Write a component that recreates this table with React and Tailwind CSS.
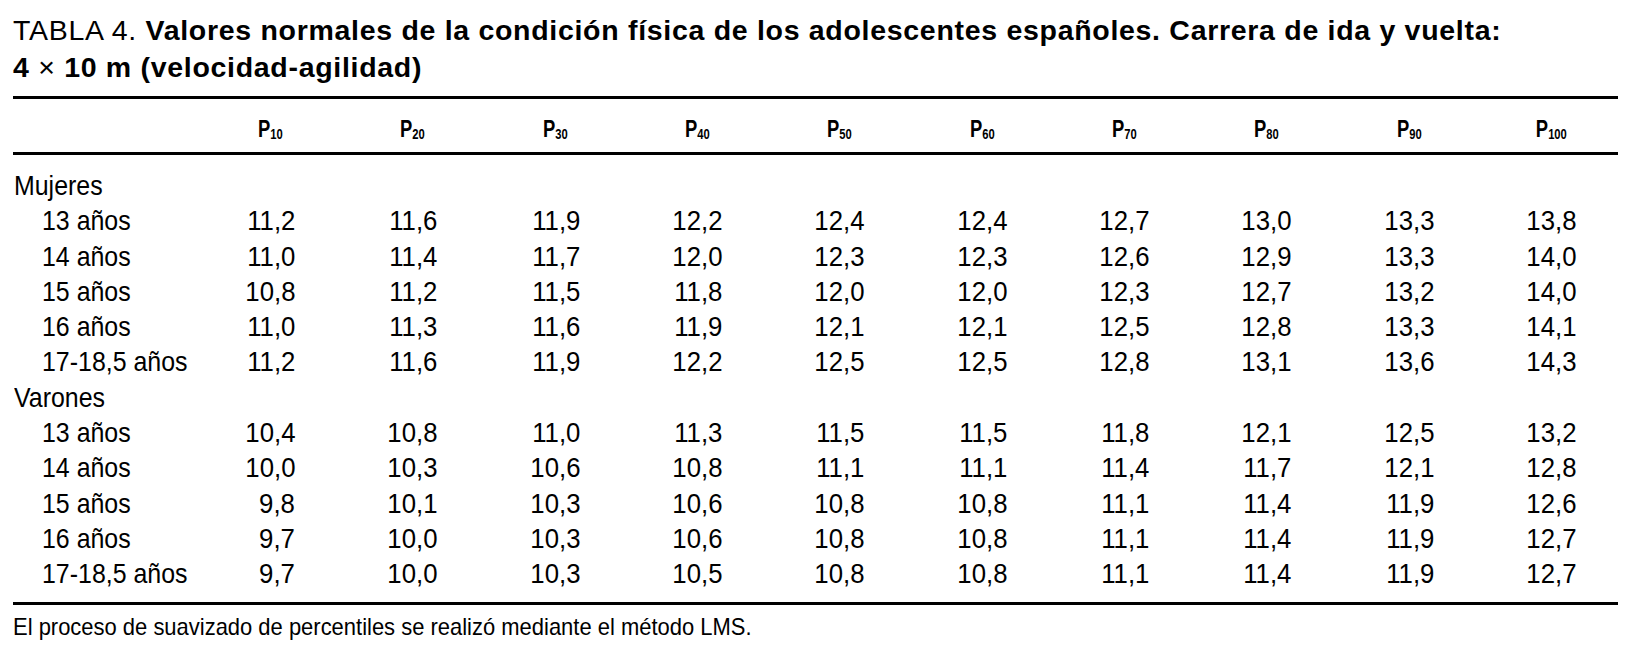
import React from "react";

const headers = ["10", "20", "30", "40", "50", "60", "70", "80", "90", "100"];

const groups = [
  {
    name: "Mujeres",
    rows: [
      ["13 años", "11,2 11,6 11,9 12,2 12,4 12,4 12,7 13,0 13,3 13,8"],
      ["14 años", "11,0 11,4 11,7 12,0 12,3 12,3 12,6 12,9 13,3 14,0"],
      ["15 años", "10,8 11,2 11,5 11,8 12,0 12,0 12,3 12,7 13,2 14,0"],
      ["16 años", "11,0 11,3 11,6 11,9 12,1 12,1 12,5 12,8 13,3 14,1"],
      ["17-18,5 años", "11,2 11,6 11,9 12,2 12,5 12,5 12,8 13,1 13,6 14,3"],
    ],
  },
  {
    name: "Varones",
    rows: [
      ["13 años", "10,4 10,8 11,0 11,3 11,5 11,5 11,8 12,1 12,5 13,2"],
      ["14 años", "10,0 10,3 10,6 10,8 11,1 11,1 11,4 11,7 12,1 12,8"],
      ["15 años", "9,8 10,1 10,3 10,6 10,8 10,8 11,1 11,4 11,9 12,6"],
      ["16 años", "9,7 10,0 10,3 10,6 10,8 10,8 11,1 11,4 11,9 12,7"],
      ["17-18,5 años", "9,7 10,0 10,3 10,5 10,8 10,8 11,1 11,4 11,9 12,7"],
    ],
  },
];

const gridCols = "grid grid-cols-[140px_repeat(10,142.35px)_1fr]";

export default function App() {
  return (
    <div className="w-[1626px] h-[651px] bg-white text-black pl-[13px] pt-[12px] overflow-hidden font-['Liberation_Sans',Arial,sans-serif]">
      <div className="w-[1605px]">
        <div className="text-[28.5px] leading-[37px] tracking-[0.7px]">
          <div className="whitespace-nowrap">
            <span>TABLA 4. </span>
            <span className="font-bold">
              Valores normales de la condición física de los adolescentes españoles. Carrera de ida y vuelta:
            </span>
          </div>
          <div className="whitespace-nowrap font-bold">
            4 <span className="font-normal">×</span> 10 m (velocidad-agilidad)
          </div>
        </div>

        <div className="mt-[10px] border-t-[3px] border-b-[3px] border-black">
          <div className={`${gridCols} h-[53px] items-end pb-[7px]`}>
            <div />
            {headers.map((h) => (
              <div key={h} className="flex justify-end">
                <div className="w-[50px] flex justify-center">
                  <span className="inline-block origin-center scale-x-[0.8] whitespace-nowrap text-[23px] leading-[22px] font-bold">
                    P<span className="text-[14px] align-[-2px]">{h}</span>
                  </span>
                </div>
              </div>
            ))}
            <div />
          </div>
        </div>

        <div className="pt-[13px] pb-[10px] border-b-[3px] border-black text-[28px] leading-[35.3px]">
          {groups.map((g) => (
            <div key={g.name}>
              <div className="pl-[1px] whitespace-nowrap">
                <span className="inline-block origin-left scale-x-[0.89]">{g.name}</span>
              </div>
              {g.rows.map(([label, vals]) => (
                <div key={g.name + label} className={gridCols}>
                  <div className="pl-[29px] whitespace-nowrap">
                    <span className="inline-block origin-left scale-x-[0.89]">{label}</span>
                  </div>
                  {vals.split(" ").map((v, i) => (
                    <div key={i} className="text-right whitespace-nowrap">
                      <span className="inline-block origin-right scale-x-[0.92]">{v}</span>
                    </div>
                  ))}
                  <div />
                </div>
              ))}
            </div>
          ))}
        </div>

        <div className="mt-[8px] text-[24px] leading-[28px] whitespace-nowrap">
          <span className="inline-block origin-left scale-x-[0.915]">
            El proceso de suavizado de percentiles se realizó mediante el método LMS.
          </span>
        </div>
      </div>
    </div>
  );
}
